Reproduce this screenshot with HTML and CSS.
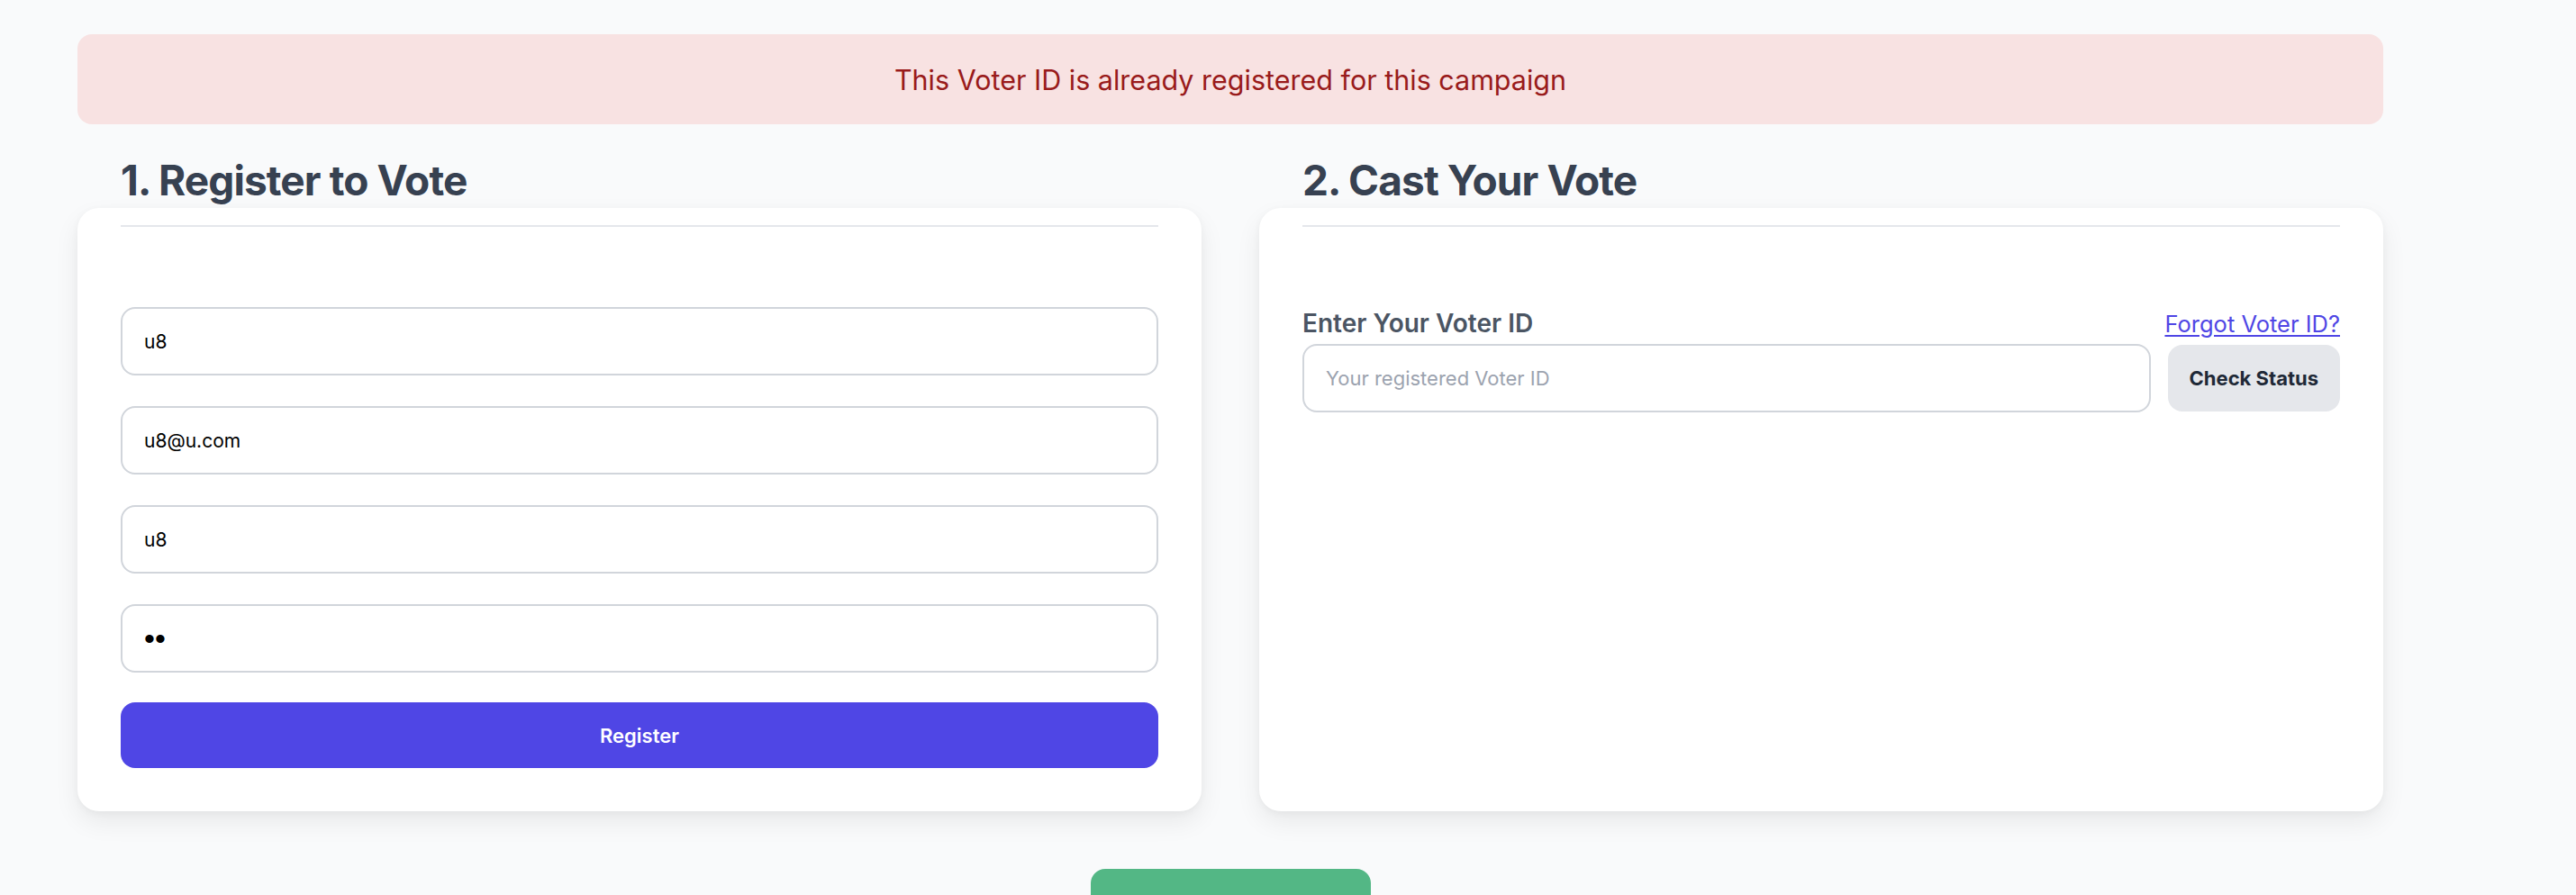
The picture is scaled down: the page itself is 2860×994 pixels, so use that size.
FILE: index.html
```html
<!DOCTYPE html>
<html lang="en">
<head>
<meta charset="utf-8">
<title>Vote</title>
<link rel="stylesheet" href="styles.css">
</head>
<body>
<main class="page">
  <div class="alert">This Voter ID is already registered for this campaign</div>
  <div class="columns">
    <section class="column">
      <h2 class="heading">1. Register to Vote</h2>
      <div class="card">
        <div class="divider"></div>
        <form class="form">
          <input class="field" type="text" value="u8">
          <input class="field" type="email" value="u8@u.com">
          <input class="field" type="text" value="u8">
          <input class="field field-password" type="password" value="u8">
          <button class="btn-primary" type="button">Register</button>
        </form>
      </div>
    </section>
    <section class="column">
      <h2 class="heading">2. Cast Your Vote</h2>
      <div class="card">
        <div class="divider"></div>
        <div class="form">
          <div class="label-row">
            <label class="label">Enter Your Voter ID</label>
            <a class="link" href="#">Forgot Voter ID?</a>
          </div>
          <div class="id-row">
            <input class="field id-field" type="text" placeholder="Your registered Voter ID">
            <button class="btn-secondary" type="button">Check Status</button>
          </div>
        </div>
      </div>
    </section>
  </div>
  <div class="footer">
    <button class="btn-green" type="button">View Results</button>
  </div>
</main>
</body>
</html>
```

FILE: styles.css
```css
* { box-sizing: border-box; }
html, body { margin: 0; padding: 0; }
body {
  background: #f9fafb;
  font-family: Inter, "Noto Sans", "Liberation Sans", sans-serif;
  color: #111827;
  overflow: hidden;
}
.page {
  width: 2560px;
  margin-left: 86px;
  padding-top: 38px;
}
.alert {
  height: 100px;
  border-radius: 16px;
  background: #f8e2e2;
  color: #991b1b;
  font-size: 30.5px;
  display: flex;
  align-items: center;
  justify-content: center;
}
.columns {
  display: grid;
  grid-template-columns: 1fr 1fr;
  column-gap: 64px;
  margin-top: 34px;
}
.column {
  display: flex;
  flex-direction: column;
}
.heading {
  margin: 0 0 3px 48px;
  font-size: 46px;
  line-height: 56px;
  font-weight: 700;
  color: #374151;
  letter-spacing: -0.9px;
}
.card {
  flex: 1;
  background: #fff;
  border-radius: 24px;
  padding: 19px 48px 48px;
  box-shadow: 0 12px 28px rgba(0,0,0,0.07), 0 2px 8px rgba(0,0,0,0.04);
}
.divider {
  height: 2px;
  background: #e5e7eb;
}
.form {
  margin-top: 89px;
  display: flex;
  flex-direction: column;
}
.field {
  display: block;
  width: 100%;
  height: 76px;
  border: 2px solid #d1d5db;
  border-radius: 16px;
  padding: 0 24px;
  font-family: Inter, "Noto Sans", sans-serif;
  font-size: 21px;
  color: #000;
  background: #fff;
  outline: none;
}
.field + .field { margin-top: 34px; }
.field::placeholder { color: #9ca3af; }
.field-password {
  font-family: "Liberation Sans", Arial, sans-serif;
  font-size: 34px;
}
.btn-primary {
  margin-top: 33px;
  height: 73px;
  border: 0;
  border-radius: 16px;
  background: #4f46e5;
  color: #fff;
  font-family: Inter, "Noto Sans", sans-serif;
  font-size: 22px;
  font-weight: 600;
}
.label-row {
  display: flex;
  justify-content: space-between;
  align-items: baseline;
  height: 36px;
  line-height: 36px;
  margin-bottom: 5px;
}
.label {
  font-size: 28px;
  font-weight: 600;
  color: #4b5563;
}
.link {
  font-size: 25.5px;
  color: #4f46e5;
  text-decoration: underline;
  text-underline-offset: 3px;
}
.id-row {
  display: flex;
  align-items: center;
  gap: 19px;
}
.id-field {
  flex: 1;
  font-size: 22px;
}
.btn-secondary {
  height: 74px;
  padding: 0 24px;
  border: 0;
  border-radius: 16px;
  background: #e5e7eb;
  color: #1f2937;
  font-family: Inter, "Noto Sans", sans-serif;
  font-size: 22px;
  font-weight: 700;
}
.footer {
  display: flex;
  justify-content: center;
  margin-top: 64px;
}
.btn-green {
  width: 311px;
  height: 92px;
  border: 0;
  border-radius: 16px;
  background: #53b785;
  color: #fff;
  font-family: Inter, "Noto Sans", sans-serif;
  font-size: 22px;
  font-weight: 600;
}
```
